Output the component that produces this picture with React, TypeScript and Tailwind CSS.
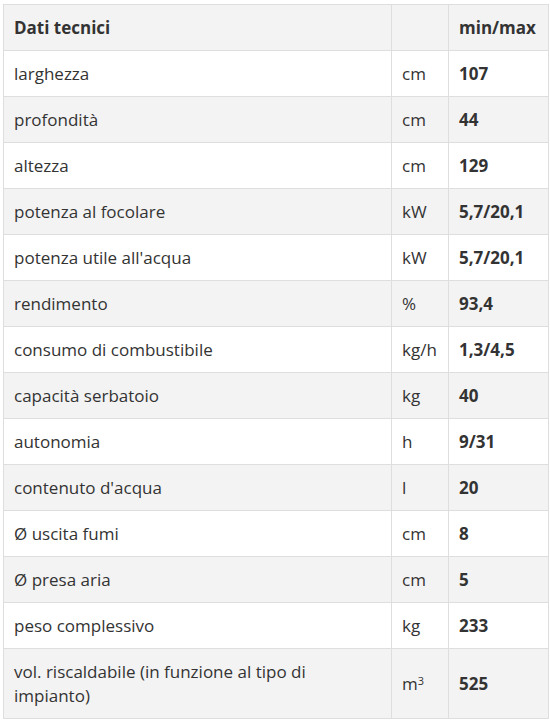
import React from 'react';

type Row = { label: string; unit: React.ReactNode; value: string };

const rows: Row[] = [
  { label: 'larghezza', unit: 'cm', value: '107' },
  { label: 'profondità', unit: 'cm', value: '44' },
  { label: 'altezza', unit: 'cm', value: '129' },
  { label: 'potenza al focolare', unit: 'kW', value: '5,7/20,1' },
  { label: "potenza utile all'acqua", unit: 'kW', value: '5,7/20,1' },
  { label: 'rendimento', unit: '%', value: '93,4' },
  { label: 'consumo di combustibile', unit: 'kg/h', value: '1,3/4,5' },
  { label: 'capacità serbatoio', unit: 'kg', value: '40' },
  { label: 'autonomia', unit: 'h', value: '9/31' },
  { label: "contenuto d'acqua", unit: 'l', value: '20' },
  { label: 'Ø uscita fumi', unit: 'cm', value: '8' },
  { label: 'Ø presa aria', unit: 'cm', value: '5' },
  { label: 'peso complessivo', unit: 'kg', value: '233' },
  {
    label: 'vol. riscaldabile (in funzione al tipo di impianto)',
    unit: (
      <>
        m<sup className="text-[11px]">3</sup>
      </>
    ),
    value: '525',
  },
];

const cell = 'border border-[#dedede] px-[10px] pt-[11px] pb-[10px] align-middle';

export default function App() {
  return (
    <div
      className="bg-white pt-[4px] pl-[3px] text-[17px] leading-[24px] text-[#333333]"
      style={{ fontFamily: '"Open Sans", "Noto Sans", sans-serif' }}
    >
      <table className="w-[545px] table-fixed border-collapse">
        <colgroup>
          <col className="w-[388px]" />
          <col className="w-[57px]" />
          <col className="w-[100px]" />
        </colgroup>
        <thead>
          <tr className="bg-[#f3f3f3]">
            <th className={`${cell} text-left font-bold`}>Dati tecnici</th>
            <th className={cell}></th>
            <th className={`${cell} text-left font-bold`}>min/max</th>
          </tr>
        </thead>
        <tbody>
          {rows.map((r, i) => (
            <tr key={r.label} className={i % 2 === 1 ? 'bg-[#f3f3f3]' : 'bg-white'}>
              <td className={cell}>{r.label}</td>
              <td className={cell}>{r.unit}</td>
              <td className={`${cell} font-bold`}>{r.value}</td>
            </tr>
          ))}
        </tbody>
      </table>
    </div>
  );
}
